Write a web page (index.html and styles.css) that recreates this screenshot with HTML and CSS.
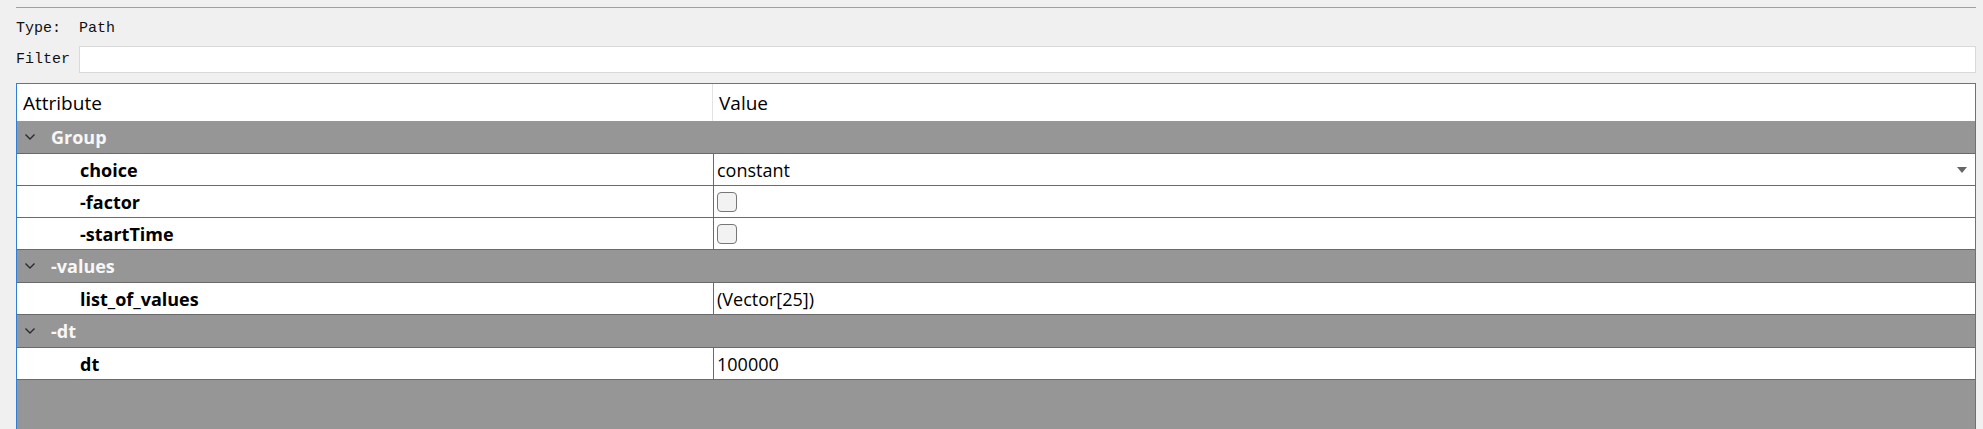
FILE: index.html
```html
<!DOCTYPE html>
<html lang="en">
<head>
    <meta charset="UTF-8">
    <title>Attribute Editor</title>
    <link rel="stylesheet" href="styles.css">
</head>
<body>

<div class="rule"></div>

<div class="type-row">Type:  Path</div>

<div class="filter-row">
    <label for="filter">Filter</label>
    <input id="filter" class="filter-input" type="text">
</div>

<div class="tree">
    <div class="tree-head">
        <div class="head-cell name-head">Attribute</div>
        <div class="head-cell">Value</div>
    </div>

    <div class="group">
        <svg class="chevron" width="10" height="6" viewBox="0 0 10 6"><polyline points="0.5,0.5 5,5 9.5,0.5" /></svg>
        <span>Group</span>
    </div>
    <div class="item">
        <div class="name">choice</div>
        <div class="value combo">constant<span class="arrow"></span></div>
    </div>
    <div class="item">
        <div class="name">-factor</div>
        <div class="value"><input type="checkbox" class="check"></div>
    </div>
    <div class="item">
        <div class="name">-startTime</div>
        <div class="value"><input type="checkbox" class="check"></div>
    </div>

    <div class="group">
        <svg class="chevron" width="10" height="6" viewBox="0 0 10 6"><polyline points="0.5,0.5 5,5 9.5,0.5" /></svg>
        <span>-values</span>
    </div>
    <div class="item">
        <div class="name">list_of_values</div>
        <div class="value">(Vector[25])</div>
    </div>

    <div class="group">
        <svg class="chevron" width="10" height="6" viewBox="0 0 10 6"><polyline points="0.5,0.5 5,5 9.5,0.5" /></svg>
        <span>-dt</span>
    </div>
    <div class="item">
        <div class="name">dt</div>
        <div class="value">100000</div>
    </div>
</div>

</body>
</html>
```

FILE: styles.css
```css
* {
    box-sizing: border-box;
}
body {
    margin: 0;
    height: 100vh;
    overflow: hidden;
    display: flex;
    flex-direction: column;
    background-color: #f0f0f0;
    font-family: "Open Sans", "Noto Sans", sans-serif;
    color: #000;
}
body > * {
    flex-shrink: 0;
}
.rule {
    height: 1px;
    margin: 7px 7px 0 16px;
    background-color: #a0a0a0;
}
.type-row {
    margin: 12px 0 0 16px;
    font-family: "Liberation Mono", monospace;
    font-size: 15px;
    line-height: 17px;
    white-space: pre;
    color: #111;
}
.filter-row {
    display: flex;
    align-items: center;
    gap: 9px;
    margin: 9px 7px 0 16px;
}
.filter-row label {
    font-family: "Liberation Mono", monospace;
    font-size: 15px;
    color: #111;
}
.filter-input {
    flex: 1;
    height: 27px;
    margin: 0;
    border: 1px solid #d9d9d9;
    background-color: #fff;
    outline: none;
}
.tree {
    flex: 1 0 auto;
    min-height: 360px;
    margin: 10px 7px 0 16px;
    border: 1px solid #2f80d4;
    background-color: #969696;
}
.tree-head {
    display: grid;
    grid-template-columns: 696px 1fr;
    height: 37px;
    background-color: #fff;
    font-size: 19px;
}
.head-cell {
    display: flex;
    align-items: center;
    padding-left: 6px;
    padding-top: 1px;
}
.name-head {
    border-right: 1px solid #e3e3e3;
}
.group {
    display: flex;
    align-items: center;
    height: 33px;
    padding-left: 8px;
    gap: 16px;
    border-bottom: 1px solid #6a6a6a;
    color: #f7f7f7;
    font-size: 18px;
    font-weight: bold;
}
.chevron {
    fill: none;
    stroke: #2b2b2b;
    stroke-width: 1.4;
}
.item {
    display: grid;
    grid-template-columns: 696px 1fr;
    height: 32px;
    background-color: #fff;
    border-bottom: 1px solid #6a6a6a;
    font-size: 18px;
}
.name {
    display: flex;
    align-items: center;
    padding-left: 63px;
    font-weight: bold;
}
.value {
    display: flex;
    align-items: center;
    padding-left: 3px;
    border-left: 1px solid #6a6a6a;
}
.combo {
    justify-content: space-between;
    padding-right: 8px;
}
.arrow {
    width: 0;
    height: 0;
    border-left: 5px solid transparent;
    border-right: 5px solid transparent;
    border-top: 6px solid #666;
}
.check {
    appearance: none;
    width: 20px;
    height: 20px;
    margin: 0;
    border: 1px solid #767676;
    border-radius: 4px;
    background-color: #f2f2f2;
}
```
